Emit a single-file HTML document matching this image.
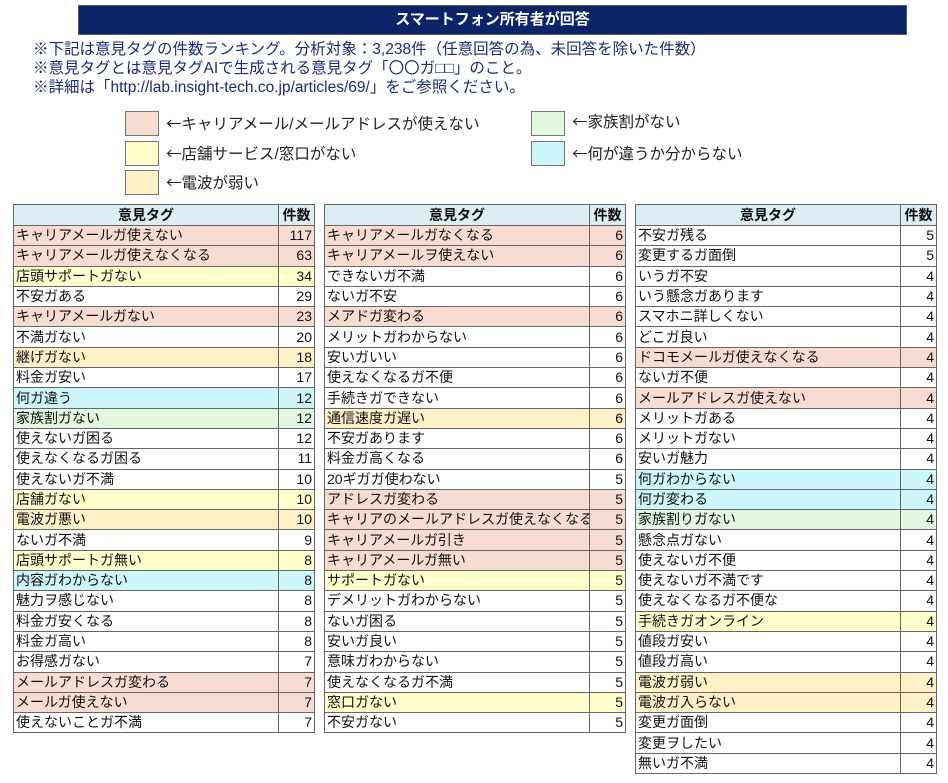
<!DOCTYPE html>
<html><head><meta charset="utf-8"><style>
body{margin:0;width:948px;height:783px;background:#fff;position:relative;font-family:"Liberation Sans","Noto Sans CJK JP",sans-serif;overflow:hidden}
.title{position:absolute;left:78px;top:5px;width:829px;height:30px;background:#0b2468;border:1px solid #556;box-sizing:border-box;color:#fff;font-weight:bold;font-size:15px;text-align:center;line-height:28px}
.note{position:absolute;left:33px;top:40px;color:#1a2a7a;font-size:15.5px;line-height:19px;white-space:nowrap}
.lg{position:absolute;width:34px;height:25px;border:1px solid #777;box-sizing:border-box}
.lt{position:absolute;font-size:15.5px;color:#222;white-space:nowrap;line-height:25px}
.ar{font-family:"Noto Sans CJK JP",sans-serif}
table{position:absolute;top:204px;border-collapse:collapse;font-size:14px;color:#111;table-layout:fixed}
td,th{border:1px solid #666;padding:0 2px;height:19.3px;line-height:19px;white-space:nowrap;overflow:hidden}
th{background:#dbeef3;font-weight:bold;height:20px}
td:nth-child(2){text-align:right;border-left:1px solid #333}
.P td{background:#f8dcd2}.Y td{background:#ffffcc}.O td{background:#fff0c8}.G td{background:#e2f8e0}.C td{background:#ccf6fa}
</style></head><body>
<div class="title">スマートフォン所有者が回答</div>
<div class="note">※下記は意見タグの件数ランキング。分析対象：3,238件（任意回答の為、未回答を除いた件数）<br>※意見タグとは意見タグAIで生成される意見タグ「〇〇ガ□□」のこと。<br>※詳細は「http://lab.insight-tech.co.jp/articles/69/」をご参照ください。</div>
<div class="lg" style="left:125px;top:111px;background:#f8dcd2"></div><div class="lt" style="left:166px;top:111px"><span class="ar">←</span>キャリアメール/メールアドレスが使えない</div>
<div class="lg" style="left:125px;top:141px;background:#ffffcc"></div><div class="lt" style="left:166px;top:141px"><span class="ar">←</span>店舗サービス/窓口がない</div>
<div class="lg" style="left:125px;top:170px;background:#fff0c8"></div><div class="lt" style="left:166px;top:170px"><span class="ar">←</span>電波が弱い</div>
<div class="lg" style="left:531px;top:111px;background:#e2f8e0"></div><div class="lt" style="left:572px;top:109px"><span class="ar">←</span>家族割がない</div>
<div class="lg" style="left:531px;top:141px;background:#ccf6fa"></div><div class="lt" style="left:572px;top:141px"><span class="ar">←</span>何が違うか分からない</div>

<table style="left:13px;width:301px"><colgroup><col style="width:265px"><col style="width:36px"></colgroup>
<tr><th>意見タグ</th><th>件数</th></tr>
<tr class="P"><td>キャリアメールガ使えない</td><td>117</td></tr>
<tr class="P"><td>キャリアメールガ使えなくなる</td><td>63</td></tr>
<tr class="Y"><td>店頭サポートガない</td><td>34</td></tr>
<tr><td>不安ガある</td><td>29</td></tr>
<tr class="P"><td>キャリアメールガない</td><td>23</td></tr>
<tr><td>不満ガない</td><td>20</td></tr>
<tr class="O"><td>継げガない</td><td>18</td></tr>
<tr><td>料金ガ安い</td><td>17</td></tr>
<tr class="C"><td>何ガ違う</td><td>12</td></tr>
<tr class="G"><td>家族割ガない</td><td>12</td></tr>
<tr><td>使えないガ困る</td><td>12</td></tr>
<tr><td>使えなくなるガ困る</td><td>11</td></tr>
<tr><td>使えないガ不満</td><td>10</td></tr>
<tr class="Y"><td>店舗ガない</td><td>10</td></tr>
<tr class="O"><td>電波ガ悪い</td><td>10</td></tr>
<tr><td>ないガ不満</td><td>9</td></tr>
<tr class="Y"><td>店頭サポートガ無い</td><td>8</td></tr>
<tr class="C"><td>内容ガわからない</td><td>8</td></tr>
<tr><td>魅力ヲ感じない</td><td>8</td></tr>
<tr><td>料金ガ安くなる</td><td>8</td></tr>
<tr><td>料金ガ高い</td><td>8</td></tr>
<tr><td>お得感ガない</td><td>7</td></tr>
<tr class="P"><td>メールアドレスガ変わる</td><td>7</td></tr>
<tr class="P"><td>メールガ使えない</td><td>7</td></tr>
<tr><td>使えないことガ不満</td><td>7</td></tr>
</table>

<table style="left:324px;width:301px"><colgroup><col style="width:265px"><col style="width:36px"></colgroup>
<tr><th>意見タグ</th><th>件数</th></tr>
<tr class="P"><td>キャリアメールガなくなる</td><td>6</td></tr>
<tr class="P"><td>キャリアメールヲ使えない</td><td>6</td></tr>
<tr><td>できないガ不満</td><td>6</td></tr>
<tr><td>ないガ不安</td><td>6</td></tr>
<tr class="P"><td>メアドガ変わる</td><td>6</td></tr>
<tr><td>メリットガわからない</td><td>6</td></tr>
<tr><td>安いガいい</td><td>6</td></tr>
<tr><td>使えなくなるガ不便</td><td>6</td></tr>
<tr><td>手続きガできない</td><td>6</td></tr>
<tr class="O"><td>通信速度ガ遅い</td><td>6</td></tr>
<tr><td>不安ガあります</td><td>6</td></tr>
<tr><td>料金ガ高くなる</td><td>6</td></tr>
<tr><td>20ギガガ使わない</td><td>5</td></tr>
<tr class="P"><td>アドレスガ変わる</td><td>5</td></tr>
<tr class="P"><td>キャリアのメールアドレスガ使えなくなる</td><td>5</td></tr>
<tr class="P"><td>キャリアメールガ引き</td><td>5</td></tr>
<tr class="P"><td>キャリアメールガ無い</td><td>5</td></tr>
<tr class="Y"><td>サポートガない</td><td>5</td></tr>
<tr><td>デメリットガわからない</td><td>5</td></tr>
<tr><td>ないガ困る</td><td>5</td></tr>
<tr><td>安いガ良い</td><td>5</td></tr>
<tr><td>意味ガわからない</td><td>5</td></tr>
<tr><td>使えなくなるガ不満</td><td>5</td></tr>
<tr class="Y"><td>窓口ガない</td><td>5</td></tr>
<tr><td>不安ガない</td><td>5</td></tr>
</table>

<table style="left:635px;width:301px"><colgroup><col style="width:265px"><col style="width:36px"></colgroup>
<tr><th>意見タグ</th><th>件数</th></tr>
<tr><td>不安ガ残る</td><td>5</td></tr>
<tr><td>変更するガ面倒</td><td>5</td></tr>
<tr><td>いうガ不安</td><td>4</td></tr>
<tr><td>いう懸念ガあります</td><td>4</td></tr>
<tr><td>スマホニ詳しくない</td><td>4</td></tr>
<tr><td>どこガ良い</td><td>4</td></tr>
<tr class="P"><td>ドコモメールガ使えなくなる</td><td>4</td></tr>
<tr><td>ないガ不便</td><td>4</td></tr>
<tr class="P"><td>メールアドレスガ使えない</td><td>4</td></tr>
<tr><td>メリットガある</td><td>4</td></tr>
<tr><td>メリットガない</td><td>4</td></tr>
<tr><td>安いガ魅力</td><td>4</td></tr>
<tr class="C"><td>何ガわからない</td><td>4</td></tr>
<tr class="C"><td>何ガ変わる</td><td>4</td></tr>
<tr class="G"><td>家族割りガない</td><td>4</td></tr>
<tr><td>懸念点ガない</td><td>4</td></tr>
<tr><td>使えないガ不便</td><td>4</td></tr>
<tr><td>使えないガ不満です</td><td>4</td></tr>
<tr><td>使えなくなるガ不便な</td><td>4</td></tr>
<tr class="Y"><td>手続きガオンライン</td><td>4</td></tr>
<tr><td>値段ガ安い</td><td>4</td></tr>
<tr><td>値段ガ高い</td><td>4</td></tr>
<tr class="O"><td>電波ガ弱い</td><td>4</td></tr>
<tr class="O"><td>電波ガ入らない</td><td>4</td></tr>
<tr><td>変更ガ面倒</td><td>4</td></tr>
<tr><td>変更ヲしたい</td><td>4</td></tr>
<tr><td>無いガ不満</td><td>4</td></tr>
</table>
</body></html>
